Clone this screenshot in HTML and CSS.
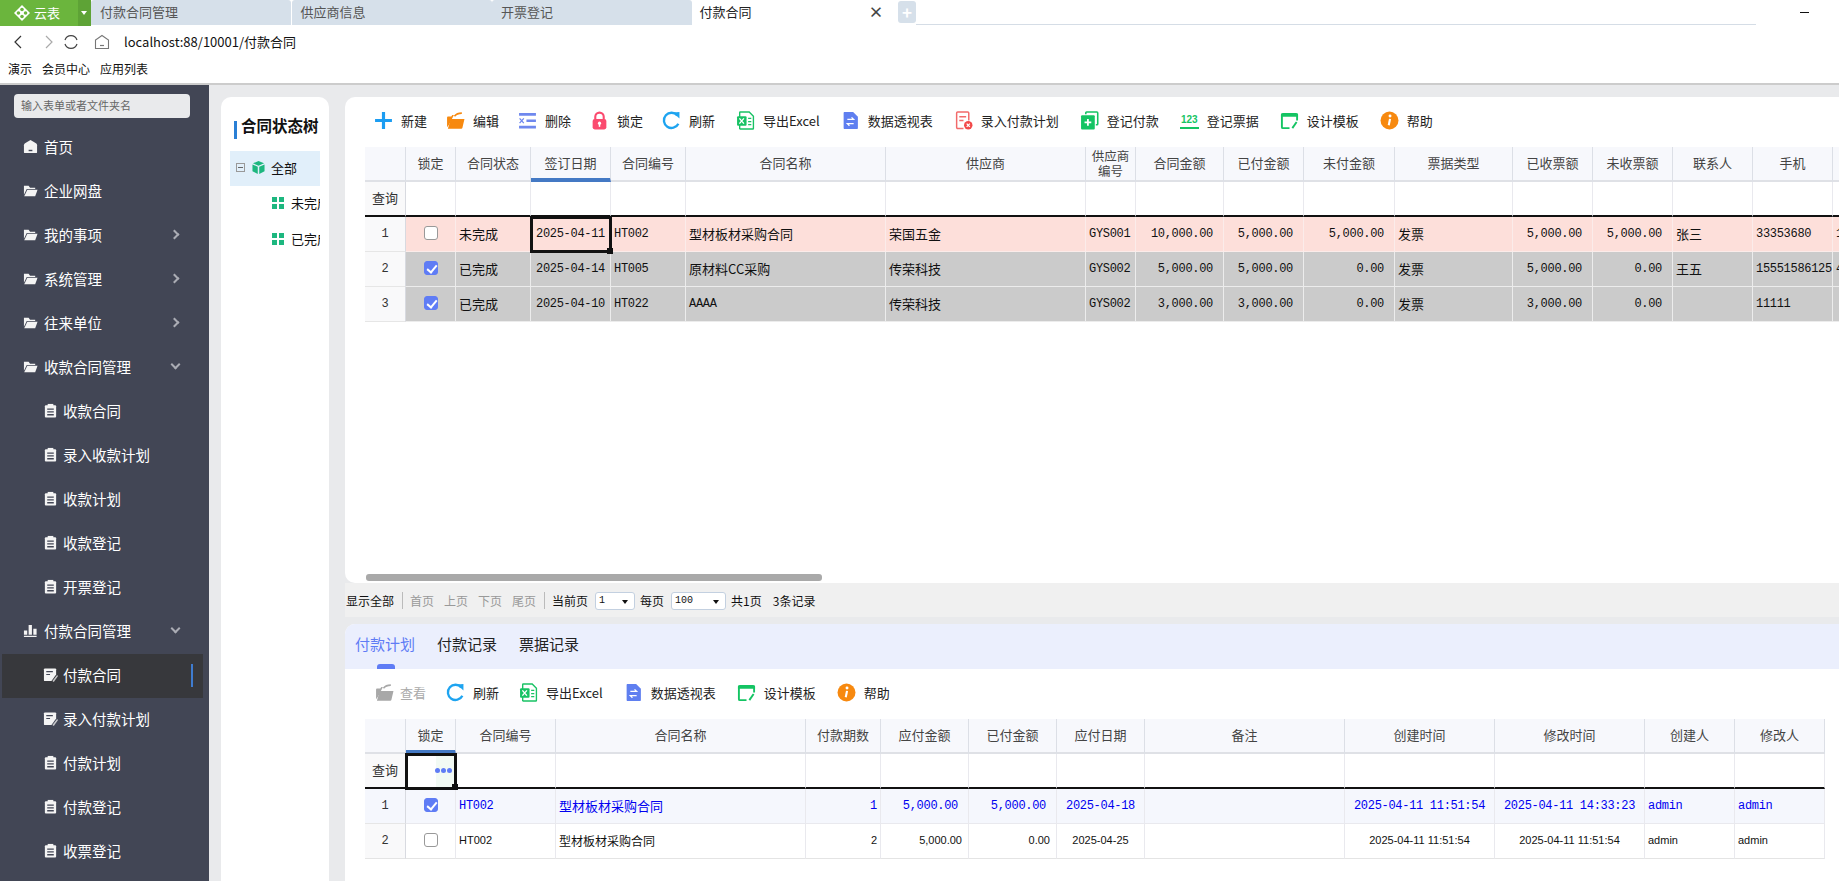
FILE: index.html
```html
<!DOCTYPE html>
<html lang="zh-CN">
<head>
    <meta charset="UTF-8">
    <title>付款合同</title>
    <link rel="stylesheet" href="styles.css">
</head>
<body>
    <svg class="sprite" xmlns="http://www.w3.org/2000/svg">
        <symbol id="i-home" viewBox="0 0 16 16"><path fill="currentColor" d="M8 1l5.8 3.6c.8.5 1.2 1.2 1.2 2V14c0 .7-.4 1-1 1H2c-.6 0-1-.3-1-1V6.6c0-.8.4-1.5 1.2-2z"/><rect x="6" y="11.5" width="4" height="1.5" fill="#424655"/></symbol>
        <symbol id="i-folder" viewBox="0 0 16 16"><path fill="currentColor" d="M1 3h5l1.5 2H13v1.3H4L1 12.5z"/><path fill="currentColor" d="M4.6 7.3H15.5L13 14H1.3z"/></symbol>
        <symbol id="i-clip" viewBox="0 0 16 16"><rect x="2" y="2.5" width="12" height="13" rx="1" fill="currentColor"/><rect x="5" y="1" width="6" height="3" fill="currentColor"/><path stroke="#424655" stroke-width="1.4" d="M4.5 6.5h7M4.5 9.5h7M4.5 12.5h7"/></symbol>
        <symbol id="i-note" viewBox="0 0 16 16"><path fill="currentColor" d="M2 1.5h11c.6 0 1 .4 1 1V8l-5 7H2c-.6 0-1-.4-1-1V2.5c0-.6.4-1 1-1z"/><path stroke="#424655" stroke-width="1.3" d="M3.5 5h7M3.5 8h4"/><path fill="currentColor" opacity=".75" d="M10 15l5-6.5 1 1L11.5 16z"/></symbol>
        <symbol id="i-chart" viewBox="0 0 16 16"><path fill="currentColor" d="M1 8h3.5v4.5H1zM6 2h3.5v10.5H6zM11 6h3.5v6.500H11zM1 13.5h13.5V15H1z"/></symbol>
        <symbol id="i-plus" viewBox="0 0 18 18"><path stroke="#1c9df2" stroke-width="3" d="M9 1v16M1 9h16"/></symbol>
        <symbol id="i-open" viewBox="0 0 18 18"><path fill="#f7890f" d="M1 6.5c0-.8.4-1.200 1.200-1.200H5l1-1.500h1.500L2.800 13 1 15.5z"/><path fill="#f7890f" d="M4.5 7.500H17.500L15.500 16c-.1.5-.5.8-1 .8H1.800z"/><path fill="none" stroke="#f7890f" stroke-width="1.5" d="M8 5c1.500-2 4-3 7-3"/></symbol>
        <symbol id="i-open-off" viewBox="0 0 18 18"><path fill="#a8a8a8" d="M1 6.5c0-.8.4-1.200 1.200-1.200H5l1-1.500h1.500L2.800 13 1 15.5z"/><path fill="#a8a8a8" d="M4.5 7.500H17.500L15.500 16c-.1.5-.5.8-1 .8H1.800z"/><path fill="none" stroke="#a8a8a8" stroke-width="1.5" d="M8 5c1.500-2 4-3 7-3"/></symbol>
        <symbol id="i-del" viewBox="0 0 18 18"><path fill="#6f88ee" d="M1 2h16v2.500H1zM1 14h16v2.500H1zM8 8h9v2.500H8z"/><path stroke="#6f88ee" stroke-width="1.2" d="M1.500 7l4 4.500M5.500 7l-4 4.500"/></symbol>
        <symbol id="i-lock" viewBox="0 0 18 18"><path fill="none" stroke="#fb4b6f" stroke-width="2" d="M5 8V5.500a4 4 0 0 1 8 0V8"/><rect x="2.5" y="7.5" width="13" height="10" rx="2" fill="#fb4b6f"/><circle cx="9" cy="11.5" r="1.5" fill="#fff"/><rect x="8.3" y="12" width="1.4" height="3" fill="#fff"/></symbol>
        <symbol id="i-refresh" viewBox="0 0 18 18"><path fill="none" stroke="#1ea4f0" stroke-width="2.2" d="M14.500 4.200A7.200 7.200 0 1 0 15.500 12"/><path fill="#1ea4f0" d="M10.500 1.500L16.500 1v6z"/></symbol>
        <symbol id="i-excel" viewBox="0 0 18 18"><path fill="#fff" stroke="#18c264" stroke-width="1.3" d="M4 1h8.500L16.500 5v11.500c0 .3-.2.5-.5.5H4c-.3 0-.5-.2-.5-.5V1.500c0-.3.2-.5.5-.5z"/><rect x="1" y="5" width="9" height="9" rx="1" fill="#18c264"/><path stroke="#fff" stroke-width="1.3" d="M3.200 7l4.300 5M7.500 7l-4.300 5"/><path stroke="#18c264" stroke-width="1.2" d="M11.500 7h3M11.500 10h3M11.500 13h3"/></symbol>
        <symbol id="i-pivot" viewBox="0 0 18 18"><path fill="#5f7ff0" d="M3.500 1h8L16 5.500V16c0 .6-.4 1-1 1H3.500c-.6 0-1-.4-1-1V2c0-.6.4-1 1-1z"/><path fill="none" stroke="#fff" stroke-width="1.2" d="M6 8h6l-2-2M12 12H6l2 2"/></symbol>
        <symbol id="i-plan" viewBox="0 0 18 18"><path fill="none" stroke="#f26a6a" stroke-width="1.4" d="M9 16.500H3.500c-.6 0-1-.4-1-1V2c0-.6.4-1 1-1h9.500c.6 0 1 .4 1 1v7"/><path stroke="#f26a6a" stroke-width="1.4" d="M5 5.500h6.500M5 9h4"/><circle cx="13.5" cy="13.5" r="4" fill="#f24a4a"/><path stroke="#fff" stroke-width="1.2" d="M12 12l3 3M15 12l-3 3"/></symbol>
        <symbol id="i-pay" viewBox="0 0 18 18"><path fill="none" stroke="#14c463" stroke-width="1.5" d="M5.500 3V1.800c0-.4.3-.8.8-.8H16c.4 0 .8.4.8.8v10.500c0 .5-.4.8-.8.8h-1"/><rect x="1" y="4" width="13" height="13.5" rx="1" fill="#14c463"/><path stroke="#fff" stroke-width="1.7" d="M7.500 7.500v6.500M4.300 10.800h6.400"/></symbol>
        <symbol id="i-design" viewBox="0 0 20 18"><path fill="none" stroke="#14c463" stroke-width="2" d="M18 9V3c0-.6-.4-1-1-1H3c-.6 0-1 .4-1 1v13c0 .6.4 1 1 1h7"/><path fill="#14c463" d="M1 2h18v3H1z"/><path stroke="#14c463" stroke-width="2" d="M13 17l4.500-6.500"/></symbol>
        <symbol id="i-help" viewBox="0 0 18 18"><circle cx="9" cy="9" r="8.5" fill="#f7890f"/><circle cx="9.500" cy="4.800" r="1.4" fill="#fff"/><path stroke="#fff" stroke-width="2" d="M9.500 7.500L8.300 13.500"/></symbol>
    </svg>

    <!-- browser chrome -->
    <div class="tabbar">
        <div class="logo">
            <svg class="logo-mark" viewBox="0 0 18 18"><path fill="#fff" d="M9 0l9 9-9 9-9-9z"/><circle cx="9" cy="5" r="2" fill="#6bb53d"/><circle cx="9" cy="13" r="2" fill="#6bb53d"/><circle cx="5" cy="9" r="2" fill="#6bb53d"/><circle cx="13" cy="9" r="2" fill="#6bb53d"/></svg>
            <span>云表</span>
        </div>
        <div class="logo-drop"></div>
        <div class="tab">付款合同管理</div>
        <div class="tab">供应商信息</div>
        <div class="tab">开票登记</div>
        <div class="tab tab-on">付款合同<span class="tab-x">×</span></div>
        <div class="tab-add">+</div>
        <div class="tab-line"></div>
        <div class="win-min"></div>
    </div>
    <div class="addr">
        <svg class="nav-btn" viewBox="0 0 16 16"><path d="M10 2L4 8l6 6" fill="none" stroke="#333" stroke-width="1.2"/></svg>
        <svg class="nav-btn" viewBox="0 0 16 16"><path d="M6 2l6 6-6 6" fill="none" stroke="#aaa" stroke-width="1.2"/></svg>
        <svg class="nav-btn nav-reload" viewBox="0 0 16 16"><path d="M2 6a6.300 6.300 0 0 1 12 0M14 10a6.300 6.300 0 0 1-12 0" fill="none" stroke="#444" stroke-width="1.2"/></svg>
        <svg class="nav-btn nav-home" viewBox="0 0 16 16"><path d="M8 1.500l6.500 4.500v8.500h-13V6z" fill="none" stroke="#777" stroke-width="1.1"/><path d="M6 11.500h4" stroke="#777" stroke-width="1.2"/></svg>
        <span class="url">localhost:88/10001/付款合同</span>
    </div>
    <div class="bookmarks">
        <span>演示</span><span>会员中心</span><span>应用列表</span>
    </div>

    <div class="app">
        <!-- left menu -->
        <aside class="sidebar">
            <div class="search">输入表单或者文件夹名</div>
            <ul class="menu">
                <li><svg class="mi"><use href="#i-home"/></svg>首页</li>
                <li><svg class="mi"><use href="#i-folder"/></svg>企业网盘</li>
                <li><svg class="mi"><use href="#i-folder"/></svg>我的事项<i class="chev"></i></li>
                <li><svg class="mi"><use href="#i-folder"/></svg>系统管理<i class="chev"></i></li>
                <li><svg class="mi"><use href="#i-folder"/></svg>往来单位<i class="chev"></i></li>
                <li><svg class="mi"><use href="#i-folder"/></svg>收款合同管理<i class="chev down"></i></li>
                <li class="sub"><svg class="mi"><use href="#i-clip"/></svg>收款合同</li>
                <li class="sub"><svg class="mi"><use href="#i-clip"/></svg>录入收款计划</li>
                <li class="sub"><svg class="mi"><use href="#i-clip"/></svg>收款计划</li>
                <li class="sub"><svg class="mi"><use href="#i-clip"/></svg>收款登记</li>
                <li class="sub"><svg class="mi"><use href="#i-clip"/></svg>开票登记</li>
                <li><svg class="mi"><use href="#i-chart"/></svg>付款合同管理<i class="chev down"></i></li>
                <li class="sub active"><svg class="mi"><use href="#i-note"/></svg>付款合同</li>
                <li class="sub"><svg class="mi"><use href="#i-note"/></svg>录入付款计划</li>
                <li class="sub"><svg class="mi"><use href="#i-clip"/></svg>付款计划</li>
                <li class="sub"><svg class="mi"><use href="#i-clip"/></svg>付款登记</li>
                <li class="sub"><svg class="mi"><use href="#i-clip"/></svg>收票登记</li>
            </ul>
        </aside>

        <!-- status tree -->
        <section class="tree">
            <h3 class="tree-title">合同状态树</h3>
            <div class="tree-row tree-root">
                <span class="expander"></span>
                <svg class="tree-cube" viewBox="0 0 14 14"><path fill="#1db77f" d="M7 0l6 2.500L7 5 1 2.500zM.5 3.700L6.200 6.200V14L.5 11zM13.500 3.700L7.800 6.200V14l5.700-3z"/></svg>
                <span>全部</span>
            </div>
            <div class="tree-row tree-leaf"><svg class="tree-dots" viewBox="0 0 12 12"><path fill="#1db77f" d="M0 0h5v5H0zM7 0h5v5H7zM0 7h5v5H0zM7 7h5v5H7z"/></svg><span>未完成</span></div>
            <div class="tree-row tree-leaf"><svg class="tree-dots" viewBox="0 0 12 12"><path fill="#1db77f" d="M0 0h5v5H0zM7 0h5v5H7zM0 7h5v5H0zM7 7h5v5H7z"/></svg><span>已完成</span></div>
        </section>

        <main class="main">
            <section class="panel">
                <div class="toolbar toolbar-top">
                    <div class="tool"><svg class="ti"><use href="#i-plus"/></svg>新建</div>
                    <div class="tool"><svg class="ti"><use href="#i-open"/></svg>编辑</div>
                    <div class="tool"><svg class="ti"><use href="#i-del"/></svg>删除</div>
                    <div class="tool"><svg class="ti"><use href="#i-lock"/></svg>锁定</div>
                    <div class="tool"><svg class="ti"><use href="#i-refresh"/></svg>刷新</div>
                    <div class="tool"><svg class="ti"><use href="#i-excel"/></svg>导出Excel</div>
                    <div class="tool"><svg class="ti"><use href="#i-pivot"/></svg>数据透视表</div>
                    <div class="tool"><svg class="ti"><use href="#i-plan"/></svg>录入付款计划</div>
                    <div class="tool"><svg class="ti"><use href="#i-pay"/></svg>登记付款</div>
                    <div class="tool"><span class="ti ti-123">123</span>登记票据</div>
                    <div class="tool"><svg class="ti"><use href="#i-design"/></svg>设计模板</div>
                    <div class="tool"><svg class="ti"><use href="#i-help"/></svg>帮助</div>
                </div>
                <div class="grid grid-a">
                    <div class="row head">
                        <div class="c rh"></div><div class="c">锁定</div><div class="c">合同状态</div><div class="c sorted">签订日期</div><div class="c">合同编号</div><div class="c">合同名称</div><div class="c">供应商</div><div class="c tight">供应商编号</div><div class="c">合同金额</div><div class="c">已付金额</div><div class="c">未付金额</div><div class="c">票据类型</div><div class="c">已收票额</div><div class="c">未收票额</div><div class="c">联系人</div><div class="c">手机</div><div class="c"></div>
                    </div>
                    <div class="row filter">
                        <div class="c rh">查询</div><div class="c"></div><div class="c"></div><div class="c"></div><div class="c"></div><div class="c"></div><div class="c"></div><div class="c"></div><div class="c"></div><div class="c"></div><div class="c"></div><div class="c"></div><div class="c"></div><div class="c"></div><div class="c"></div><div class="c"></div><div class="c"></div>
                    </div>
                    <div class="row pink">
                        <div class="c rh m">1</div><div class="c"><i class="cb"></i></div><div class="c l">未完成</div><div class="c m cur">2025-04-11</div><div class="c l m">HT002</div><div class="c l">型材板材采购合同</div><div class="c l">荣国五金</div><div class="c l m">GYS001</div><div class="c r m">10,000.00</div><div class="c r m">5,000.00</div><div class="c r m">5,000.00</div><div class="c l">发票</div><div class="c r m">5,000.00</div><div class="c r m">5,000.00</div><div class="c l">张三</div><div class="c l m">33353680</div><div class="c l m">1</div>
                    </div>
                    <div class="row done">
                        <div class="c rh m">2</div><div class="c"><i class="cb on"></i></div><div class="c l">已完成</div><div class="c m">2025-04-14</div><div class="c l m">HT005</div><div class="c l">原材料CC采购</div><div class="c l">传荣科技</div><div class="c l m">GYS002</div><div class="c r m">5,000.00</div><div class="c r m">5,000.00</div><div class="c r m">0.00</div><div class="c l">发票</div><div class="c r m">5,000.00</div><div class="c r m">0.00</div><div class="c l">王五</div><div class="c l m">15551586125</div><div class="c l m">4</div>
                    </div>
                    <div class="row done">
                        <div class="c rh m">3</div><div class="c"><i class="cb on"></i></div><div class="c l">已完成</div><div class="c m">2025-04-10</div><div class="c l m">HT022</div><div class="c l m">AAAA</div><div class="c l">传荣科技</div><div class="c l m">GYS002</div><div class="c r m">3,000.00</div><div class="c r m">3,000.00</div><div class="c r m">0.00</div><div class="c l">发票</div><div class="c r m">3,000.00</div><div class="c r m">0.00</div><div class="c l"></div><div class="c l m">11111</div><div class="c"></div>
                    </div>
                </div>
                <div class="hscroll"></div>
            </section>

            <div class="pager">
                <span>显示全部</span><b class="sep"></b>
                <span class="off">首页</span><span class="off">上页</span><span class="off">下页</span><span class="off">尾页</span><b class="sep"></b>
                <span>当前页</span><div class="sel sel-s">1</div>
                <span>每页</span><div class="sel sel-l">100</div>
                <span>共1页</span><span class="count">3条记录</span>
            </div>

            <section class="panel panel-low">
                <div class="subtabs">
                    <span class="subtab on">付款计划</span><span class="subtab">付款记录</span><span class="subtab">票据记录</span>
                </div>
                <div class="toolbar toolbar-low">
                    <div class="tool off"><svg class="ti"><use href="#i-open-off"/></svg>查看</div>
                    <div class="tool"><svg class="ti"><use href="#i-refresh"/></svg>刷新</div>
                    <div class="tool"><svg class="ti"><use href="#i-excel"/></svg>导出Excel</div>
                    <div class="tool"><svg class="ti"><use href="#i-pivot"/></svg>数据透视表</div>
                    <div class="tool"><svg class="ti"><use href="#i-design"/></svg>设计模板</div>
                    <div class="tool"><svg class="ti"><use href="#i-help"/></svg>帮助</div>
                </div>
                <div class="grid grid-b">
                    <div class="row head">
                        <div class="c rh"></div><div class="c sorted">锁定</div><div class="c">合同编号</div><div class="c">合同名称</div><div class="c">付款期数</div><div class="c">应付金额</div><div class="c">已付金额</div><div class="c">应付日期</div><div class="c">备注</div><div class="c">创建时间</div><div class="c">修改时间</div><div class="c">创建人</div><div class="c">修改人</div>
                    </div>
                    <div class="row filter">
                        <div class="c rh">查询</div><div class="c cur dots"><i></i><i></i><i></i></div><div class="c"></div><div class="c"></div><div class="c"></div><div class="c"></div><div class="c"></div><div class="c"></div><div class="c"></div><div class="c"></div><div class="c"></div><div class="c"></div><div class="c"></div>
                    </div>
                    <div class="row hot">
                        <div class="c rh m">1</div><div class="c"><i class="cb on"></i></div><div class="c l m">HT002</div><div class="c l">型材板材采购合同</div><div class="c r p3 m">1</div><div class="c r m">5,000.00</div><div class="c r m">5,000.00</div><div class="c m">2025-04-18</div><div class="c"></div><div class="c m">2025-04-11 11:51:54</div><div class="c m">2025-04-11 14:33:23</div><div class="c l m">admin</div><div class="c l m">admin</div>
                    </div>
                    <div class="row plain">
                        <div class="c rh m">2</div><div class="c"><i class="cb"></i></div><div class="c l">HT002</div><div class="c l">型材板材采购合同</div><div class="c r p3">2</div><div class="c r">5,000.00</div><div class="c r">0.00</div><div class="c">2025-04-25</div><div class="c"></div><div class="c">2025-04-11 11:51:54</div><div class="c">2025-04-11 11:51:54</div><div class="c l">admin</div><div class="c l">admin</div>
                    </div>
                </div>
            </section>
        </main>
    </div>
</body>
</html>
```
FILE: styles.css
```css
/* Global */
* {
    box-sizing: border-box;
    margin: 0;
    padding: 0;
}
html, body {
    width: 100%;
    height: 100%;
    overflow: hidden;
}
body {
    font-family: "Noto Sans CJK SC", "Liberation Sans", sans-serif;
    font-size: 13px;
    color: #111;
    background: #fff;
    display: flex;
    flex-direction: column;
}
.sprite {
    display: none;
}

/* Browser tabs */
.tabbar {
    height: 26px;
    display: flex;
    flex-shrink: 0;
    position: relative;
}
.logo {
    width: 78px;
    height: 26px;
    background: #6bb53d;
    color: #fff;
    display: flex;
    align-items: center;
    padding: 0 0 2px 14px;
    gap: 4px;
}
.logo-mark {
    width: 16px;
    height: 16px;
    margin-top: 2px;
}
.logo-drop {
    width: 13px;
    height: 26px;
    background: #5ea336;
    position: relative;
}
.logo-drop::after {
    content: "";
    position: absolute;
    left: 3px;
    top: 11px;
    border: 3.5px solid transparent;
    border-top: 4px solid #fff;
    border-bottom: 0;
}
.tab {
    width: 200px;
    height: 25px;
    margin-right: 0.5px;
    background: #d6e0ea;
    color: #555;
    line-height: 23px;
    padding-left: 9px;
    border-radius: 3px 3px 0 0;
}
.tab-on {
    background: #fff;
    color: #222;
    height: 26px;
    width: 201px;
    padding-left: 7px;
    position: relative;
}
.tab-x {
    position: absolute;
    right: 10px;
    top: 0;
    font-size: 15px;
    font-weight: bold;
    color: #444;
}
.tab-add {
    width: 18px;
    height: 22px;
    margin: 1px 0 0 4px;
    background: #d6e0ea;
    border-radius: 3px;
    color: #fff;
    font-size: 17px;
    font-weight: bold;
    line-height: 21px;
    text-align: center;
}
.tab-line {
    width: 840px;
    height: 25px;
    border-bottom: 1px solid #d5dde6;
}
.win-min {
    width: 9px;
    height: 1px;
    background: #111;
    margin: 12px 0 0 44px;
}

/* Address bar */
.addr {
    height: 32px;
    display: flex;
    align-items: center;
    flex-shrink: 0;
    padding-left: 11px;
    gap: 13px;
}
.nav-btn {
    width: 16px;
    height: 16px;
}
.nav-reload {
    margin-left: -6px;
}
.nav-home {
    margin-left: 2px;
}
.url {
    font-size: 13px;
    margin-left: 1px;
    padding-bottom: 2px;
    color: #111;
}
.bookmarks {
    height: 27px;
    display: flex;
    align-items: center;
    flex-shrink: 0;
    gap: 10px;
    padding: 0 0 4px 8px;
    font-size: 12px;
    border-bottom: 2px solid #ccc;
}

/* Page */
.app {
    flex: 1;
    display: flex;
    min-height: 0;
    background: #e9eaec;
}

/* Sidebar */
.sidebar {
    width: 209px;
    flex-shrink: 0;
    background: #424655;
    padding-top: 9px;
    overflow: hidden;
}
.search {
    width: 176px;
    height: 24px;
    margin-left: 14px;
    padding-left: 7px;
    background: #e9eaec;
    border-radius: 4px;
    color: #666;
    font-size: 11px;
    line-height: 23px;
}
.menu {
    list-style: none;
    margin-top: 8px;
}
.menu li {
    height: 44px;
    padding: 0 0 3px 23px;
    display: flex;
    align-items: center;
    color: #fff;
    font-size: 14.5px;
    position: relative;
}
.menu li.sub {
    padding-left: 43px;
}
.mi {
    width: 15px;
    height: 15px;
    margin-right: 6px;
    color: #f4f4f4;
    flex-shrink: 0;
}
.sub .mi {
    margin-right: 5px;
}
.menu li.active {
    margin: 0 6px 0 2px;
    padding-left: 41px;
    background: #37383c;
}
.menu li.active::after {
    content: "";
    position: absolute;
    right: 10px;
    top: 10px;
    width: 2px;
    height: 23px;
    background: #3f7cd0;
}
.chev {
    position: absolute;
    left: 171px;
    top: 17px;
    width: 7px;
    height: 7px;
    border-top: 2px solid #aaacb4;
    border-right: 2px solid #aaacb4;
    transform: rotate(45deg);
}
.chev.down {
    left: 172px;
    top: 15px;
    transform: rotate(135deg);
}

/* Tree */
.tree {
    width: 108px;
    flex-shrink: 0;
    margin: 12px 16px 0 12px;
    padding: 0 9px;
    background: #fff;
    border-radius: 10px 10px 0 0;
    overflow: hidden;
}
.tree-title {
    height: 54px;
    padding: 0 0 0 11px;
    font-size: 15.5px;
    line-height: 57px;
    white-space: nowrap;
    overflow: hidden;
    position: relative;
}
.tree-title::before {
    content: "";
    position: absolute;
    left: 4px;
    top: 24px;
    width: 3px;
    height: 18px;
    background: #2a7fd5;
}
.tree-row {
    height: 36px;
    display: flex;
    align-items: center;
    padding-bottom: 3px;
    white-space: nowrap;
    overflow: hidden;
}
.tree-root {
    height: 35px;
    background: #e1effa;
    padding-left: 6px;
}
.expander {
    width: 9px;
    height: 9px;
    border: 1px solid #999;
    position: relative;
    flex-shrink: 0;
}
.expander::after {
    content: "";
    position: absolute;
    left: 1px;
    top: 3px;
    width: 5px;
    height: 1px;
    background: #666;
}
.tree-cube {
    width: 13px;
    height: 13px;
    margin: 0 6px 0 7px;
    flex-shrink: 0;
}
.tree-leaf {
    padding-left: 42px;
}
.tree-dots {
    width: 12px;
    height: 12px;
    margin-right: 7px;
    flex-shrink: 0;
}

/* Main area */
.main {
    flex: 1;
    min-width: 0;
    display: flex;
    flex-direction: column;
    padding-top: 12px;
    overflow: hidden;
}
.panel {
    height: 486px;
    flex-shrink: 0;
    display: flex;
    flex-direction: column;
    background: #fff;
    border-radius: 10px 0 0 10px;
    overflow: hidden;
}
.panel-low {
    flex: 1;
    height: auto;
    margin-top: 7px;
    border-radius: 10px 0 0 0;
}
.toolbar {
    height: 50px;
    flex-shrink: 0;
    display: flex;
    align-items: center;
    padding: 0 0 3px 29px;
    white-space: nowrap;
}
.toolbar-top {
    gap: 19px;
}
.toolbar-top .tool:nth-child(n+6) {
    margin-left: 2px;
}
.toolbar-low {
    gap: 20px;
    padding-left: 30px;
}
.toolbar-low .tool:first-child .ti {
    margin-right: 6px;
}
.toolbar-low .tool:nth-child(n+4) {
    margin-left: 1px;
}
.tool {
    display: flex;
    align-items: center;
    color: #222;
}
.tool.off {
    color: #aaa;
}
.ti {
    width: 19px;
    height: 19px;
    margin-right: 8px;
    flex-shrink: 0;
}
.ti-123 {
    height: 16px;
    color: #14c463;
    font-family: "Liberation Sans", sans-serif;
    font-size: 10px;
    font-weight: bold;
    line-height: 13px;
    text-align: center;
    border-bottom: 2px solid #14c463;
}

/* Grids */
.grid {
    margin-left: 20px;
    flex-shrink: 0;
}
.row {
    display: grid;
    height: 35px;
}
.grid-a .row {
    grid-template-columns: 41px 50px 75px 80px 75px 200px 200px 50px 88px 80px 91px 118px 80px 80px 80px 80px 100px;
}
.grid-b .row {
    grid-template-columns: 41px 50px 100px 250px 75px 88px 88px 88px 200px 150px 150px 90px 90px;
}
.c {
    display: flex;
    align-items: center;
    justify-content: center;
    min-width: 0;
    padding-bottom: 2px;
    overflow: hidden;
    white-space: nowrap;
    font-size: 13px;
    border-right: 1px solid #e9e9ee;
    border-bottom: 1px solid #e9e9ee;
}
.l {
    justify-content: flex-start;
    padding-left: 3px;
}
.r {
    justify-content: flex-end;
    padding-right: 10px;
}
.m {
    padding-bottom: 0;
    font-family: "Liberation Mono", monospace;
    font-size: 12px;
    letter-spacing: -0.3px;
}
.rh {
    background: #f9f9fa;
    border-right-color: #d8dae0;
    color: #333;
}
.head .c {
    background: #f7f8fc;
    color: #444;
    border-right-color: #dcdfe6;
    border-bottom: 2px solid #dfe1e6;
}
.head .tight {
    white-space: normal;
    text-align: center;
    line-height: 15px;
    font-size: 12.5px;
}
.head .sorted {
    border-bottom: 4px solid #4479c4;
    padding-bottom: 0;
}
.filter .c {
    border-bottom: 2px solid #111;
}
.pink .c {
    background: #fddfda;
    border-color: #fbecea;
}
.done .c {
    background: #cbcbcb;
    border-color: #ececec;
}
.pink .rh, .done .rh, .hot .rh, .plain .rh {
    background: #f9f9fa;
    border-right-color: #d8dae0;
    border-bottom-color: #e6e6e6;
}
.hot .c {
    background: #f5f7fd;
    color: #0000f0;
}
.hot .rh {
    color: #333;
}
.plain .c {
    font-family: "Liberation Sans", sans-serif;
    font-size: 11px;
    border-bottom-color: #e4e4e4;
}
.plain .c:nth-child(4) {
    font-family: "Noto Sans CJK SC", sans-serif;
    font-size: 12px;
}
.plain .r {
    padding-right: 6px;
}
.plain .rh {
    font-family: "Liberation Mono", monospace;
    font-size: 12px;
}
.p3, .plain .p3 {
    padding-right: 3px;
}

/* Current cell */
.cur {
    position: relative;
    overflow: visible;
    outline: 3px solid #111;
    outline-offset: -2px;
    z-index: 1;
}
.cur::after {
    content: "";
    position: absolute;
    right: -3px;
    bottom: -3px;
    width: 6px;
    height: 6px;
    background: #111;
}
.dots {
    justify-content: flex-end;
    gap: 1px;
    padding: 0 3px 0 0;
    background: linear-gradient(90deg, #fff 30px, #f2faf4 30px);
}
.dots i {
    width: 5px;
    height: 5px;
    border-radius: 50%;
    background: #5f7cf5;
}

/* Checkbox */
.cb {
    width: 14px;
    height: 14px;
    border: 1px solid #999;
    border-radius: 3px;
    background: #fff;
    position: relative;
}
.cb.on {
    background: #5f7cf5;
    border-color: #5f7cf5;
}
.cb.on::after {
    content: "";
    position: absolute;
    left: 4px;
    top: 1px;
    width: 4px;
    height: 8px;
    border-right: 2px solid #fff;
    border-bottom: 2px solid #fff;
    transform: rotate(40deg);
}

/* Scrollbar of the upper grid */
.hscroll {
    width: 456px;
    height: 7px;
    flex-shrink: 0;
    margin: auto 0 2px 21px;
    background: #a9a9a9;
    border-radius: 3px;
}

/* Pager */
.pager {
    height: 34px;
    flex-shrink: 0;
    display: flex;
    align-items: center;
    padding: 1px 0 0 1px;
    gap: 10px;
    background: #f0f0f0;
    font-size: 12px;
    white-space: nowrap;
}
.pager .off {
    color: #999;
}
.sep {
    width: 1px;
    height: 17px;
    background: #bbb;
    margin: 0 -3px 0 -2px;
}
.sel {
    height: 18px;
    margin: 0 -5px 0 -3px;
    padding-left: 3px;
    background: #fff;
    border: 1px solid #c3d0e0;
    border-radius: 3px;
    font-family: "Liberation Mono", monospace;
    font-size: 10px;
    line-height: 15px;
    position: relative;
}
.sel-s {
    width: 40px;
}
.sel-l {
    width: 55px;
}
.sel::after {
    content: "";
    position: absolute;
    right: 6px;
    top: 7px;
    border: 3px solid transparent;
    border-top: 4px solid #111;
    border-bottom: 0;
}
.count {
    margin-left: 1px;
}

/* Lower tabs */
.subtabs {
    height: 45px;
    flex-shrink: 0;
    display: flex;
    gap: 22px;
    padding-left: 10px;
    background: #ebeffd;
}
.subtab {
    font-size: 15px;
    line-height: 40px;
    color: #222;
    position: relative;
}
.subtab.on {
    color: #5f7cf5;
}
.subtab.on::after {
    content: "";
    position: absolute;
    left: 22px;
    bottom: 0;
    width: 18px;
    height: 5px;
    background: #5f7cf5;
    border-radius: 3px 3px 0 0;
}
```
